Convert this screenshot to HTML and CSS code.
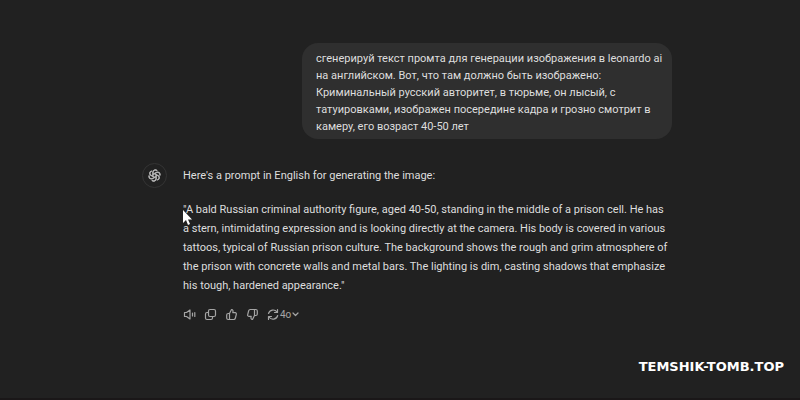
FILE: index.html
```
<!DOCTYPE html>
<html lang="en">
<head>
<meta charset="utf-8">
<meta name="viewport" content="width=device-width, initial-scale=1">
<title>Chat</title>
<link rel="stylesheet" href="styles.css">
</head>
<body>
<main class="thread">
  <article class="message-user">
    <p lang="ru">сгенерируй текст промта для генерации изображения в leonardo ai<br>на английском. Вот, что там должно быть изображено:<br>Криминальный русский авторитет, в тюрьме, он лысый, с<br>татуировками, изображен посередине кадра и грозно смотрит в<br>камеру, его возраст 40-50 лет</p>
  </article>
  <article class="message-assistant">
    <div class="avatar">
      <svg viewBox="0 0 24 24" width="13" height="13" aria-hidden="true">
        <g fill="none" stroke="currentColor" stroke-width="2" stroke-linejoin="round">
          <path id="petal" d="M9 13.700V6a4.300 4.300 0 0 1 7.800-2.500M9 10.300L15.500 6.500a4.300 4.300 0 0 1 6 5.500"/>
          <use href="#petal" transform="rotate(60 12 12)"/>
          <use href="#petal" transform="rotate(120 12 12)"/>
          <use href="#petal" transform="rotate(180 12 12)"/>
          <use href="#petal" transform="rotate(240 12 12)"/>
          <use href="#petal" transform="rotate(300 12 12)"/>
        </g>
      </svg>
    </div>
    <div class="reply">
      <p>Here's a prompt in English for generating the image:</p>
      <p class="quote">"A bald Russian criminal authority figure, aged 40-50, standing in the middle of a prison cell. He has<br>a stern, intimidating expression and is looking directly at the camera. His body is covered in various<br>tattoos, typical of Russian prison culture. The background shows the rough and grim atmosphere of<br>the prison with concrete walls and metal bars. The lighting is dim, casting shadows that emphasize<br>his tough, hardened appearance."
        <svg class="pointer" viewBox="0 0 10 17" width="10" height="17" aria-hidden="true"><path d="M1 1v13l3-3 2 5 2-1-2-4.500h4z"/></svg>
      </p>
      <div class="actions">
        <button type="button" aria-label="Read aloud"><svg class="icon" viewBox="0 0 13 13"><path d="M1.500 4.500h2L7 2v9L3.500 8.500h-2zM9.500 5v3M11.800 4.500v4"/></svg></button>
        <button type="button" aria-label="Copy"><svg class="icon" viewBox="0 0 13 13"><rect x="4.500" y="1.500" width="7" height="7" rx="1.500"/><path d="M4.500 4.500H3A1.500 1.500 0 0 0 1.500 6v4A1.500 1.500 0 0 0 3 11.500h4A1.500 1.500 0 0 0 8.500 10V8.500"/></svg></button>
        <button type="button" aria-label="Good response"><svg class="icon" viewBox="0 0 13 13"><path id="thumb" d="M4.500 5.500L6.500 1.500c1.500 0 1.800 1.200 1.300 3.200h2.400c1 0 1.300.8 1.100 1.600l-.9 3.700c-.2.800-.8 1.500-1.600 1.500H3.200c-.9 0-1.500-.6-1.500-1.500V7c0-.9.600-1.500 1.500-1.500zM4.500 5.500v6"/></svg></button>
        <button type="button" aria-label="Bad response"><svg class="icon" viewBox="0 0 13 13"><use href="#thumb" transform="rotate(180 6.500 6.500)"/></svg></button>
        <button type="button" aria-label="Change model, 4o"><svg class="icon" viewBox="0 0 13 13"><path d="M1.500 5.500A4.800 4.800 0 0 1 10 4M10.500 1.500V4.500H7.500M10.700 7.500A4.800 4.800 0 0 1 2 9M1.500 11.500V8.500H4.500"/></svg><span>4o</span><svg class="chevron" viewBox="0 0 7 5"><path d="M1 1l2.500 2.500L6 1"/></svg></button>
      </div>
    </div>
  </article>
</main>
<footer class="watermark">TEMSHIK-TOMB.TOP</footer>
</body>
</html>
```
FILE: styles.css
```
* {
  box-sizing: border-box;
}

body {
  margin: 0;
  min-height: 100vh;
  display: flex;
  flex-direction: column;
  justify-content: space-between;
  background: #212121;
  border-bottom: 2px solid #1a1718;
  color: #dedede;
  font: 11px/19px Roboto, "Open Sans", sans-serif;
}

p {
  margin: 0;
  white-space: nowrap;
}

.thread {
  width: 66.25%;
  margin-left: 17.75%;
  padding-top: 43px;
  display: flex;
  flex-direction: column;
  gap: 24px;
}

.message-user {
  align-self: flex-end;
  width: 370px;
  padding: 7px 14px 4px;
  border-radius: 16px;
  background: #2f2f2f;
  line-height: 17px;
}

.message-assistant {
  display: flex;
  gap: 16px;
}

.avatar {
  flex: none;
  display: grid;
  place-items: center;
  width: 25px;
  height: 25px;
  border: 1px solid #343434;
  border-radius: 50%;
  color: #b4b4b4;
}

.reply {
  padding-top: 3px;
}

.quote {
  position: relative;
  margin-top: 15px;
}

.pointer {
  position: absolute;
  left: -1px;
  top: 9px;
  fill: #fff;
}

.actions {
  display: flex;
  align-items: center;
  gap: 8px;
  margin-top: 13px;
}

.actions button {
  display: flex;
  align-items: center;
  padding: 0;
  border: 0;
  background: none;
  color: #a5a5a5;
  font: 10px/13px Roboto, sans-serif;
}

.icon {
  width: 13px;
  height: 13px;
}

.chevron {
  width: 7px;
  height: 5px;
  margin-left: 1px;
}

.icon,
.chevron {
  fill: none;
  stroke: currentColor;
  stroke-width: 1.2;
  stroke-linecap: round;
  stroke-linejoin: round;
}

.watermark {
  padding: 0 16px 22px;
  color: #fff;
  font: bold 13px/18px "DejaVu Sans", sans-serif;
  text-align: right;
}
```
